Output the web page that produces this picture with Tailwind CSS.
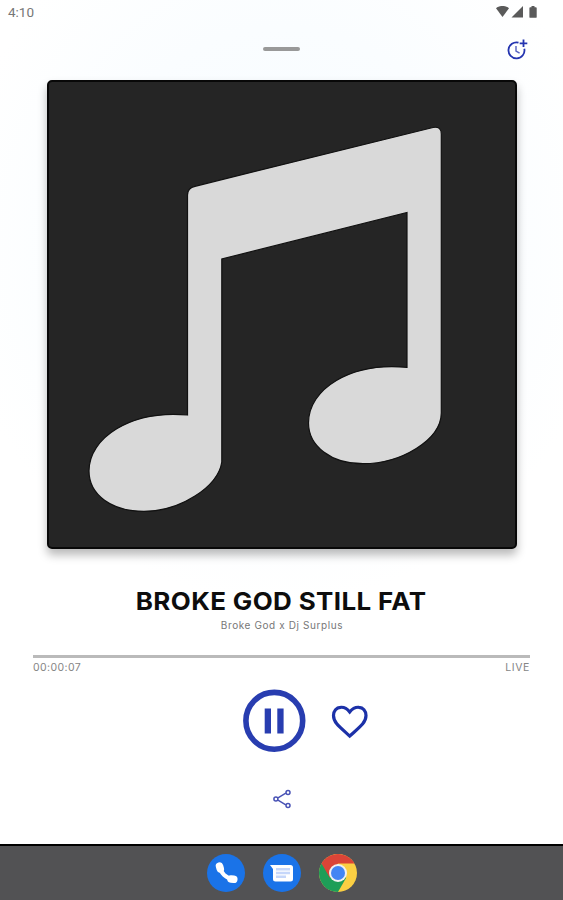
<!DOCTYPE html>
<html lang="en">
<head>
  <meta charset="UTF-8" />
  <meta name="viewport" content="width=device-width, initial-scale=1.0"/>
  <title>Now Playing</title>
  <script src="https://cdn.jsdelivr.net/npm/@tailwindcss/browser@4"></script>
</head>
<body class="bg-white font-['Inter','Liberation_Sans',sans-serif]">
  <div class="flex flex-col h-[900px] w-[563px] overflow-hidden bg-[radial-gradient(ellipse_330px_360px_at_50%_27%,#f6fbff_0%,#fafdff_60%,#ffffff_100%)]">

    <!-- Status bar -->
    <header class="flex h-6 shrink-0 items-center justify-between pl-2 pr-[25px]">
      <span class="font-['Roboto',sans-serif] text-[13.5px] leading-6 text-[#777]">4:10</span>
      <svg class="h-3 w-[42px]" viewBox="496 6 42 12" fill="#5a5a5a">
        <path d="M496 8.2C499.5 5.2 505.500 5.2 509 8.200L502.500 17Z"/>
        <path d="M523 6V17.500H511.500Z"/>
        <path d="M531.500 6h3v1.200h1.300q.9 0 .9.900v8.800q0 .9-.9.900h-5.500q-.9 0-.9-.9V8.100q0-.9.900-.9h1.200Z"/>
      </svg>
    </header>

    <!-- Drag handle and sleep timer -->
    <div class="grid h-[55.500px] shrink-0 grid-cols-3 px-[35px] pt-[13px]">
      <span></span>
      <div class="mt-[10px] h-1 w-[37px] justify-self-center rounded-full bg-[#999]"></div>
      <button class="h-6 w-6 justify-self-end" aria-label="Sleep timer">
        <svg class="h-6 w-6" viewBox="504 37 24 24" fill="none" stroke="#2434b0" stroke-width="1.800">
          <path d="M518.500 42.700A8 8 0 1 0 524.300 48.800" />
          <path d="M516 46v5l3.600 2.200" stroke-width="1.400" stroke="#5560c0"/>
          <path d="M523.500 39.500v7.600M519.700 43.300h7.600"/>
        </svg>
      </button>
    </div>

    <!-- Cover art -->
    <div class="mx-auto h-[469.500px] w-[470px] shrink-0 overflow-hidden rounded-[5px] border-2 border-[#080808] bg-[#252525] shadow-[0_6px_10px_rgba(0,0,0,0.28)]">
      <svg class="h-[465px] w-[466px]" viewBox="49 82 466 465">
        <path fill="#d9d9d9" stroke="#111" stroke-width="1.200" d="M187.500 415V195Q187.500 188 195 186.300L433 127.500Q441.300 126 441.300 134V413C441 440 401 463.700 363 463.700C331 463.700 308.500 446 308.500 423C308.500 389 350 362 407 367.300V212.500L221.800 259V462C218 487 180 511.300 144 511.300C112 511.300 89 495 89 471C89 438 130 410 187.500 415Z"/>
      </svg>
    </div>

    <!-- Track info -->
    <div class="mt-[37px] flex shrink-0 flex-col items-center">
      <h1 class="h-[30px] scale-x-[1.060] whitespace-nowrap text-[24.500px] font-bold leading-[30px] tracking-[0.350px] text-[#0d0d0d]">BROKE GOD STILL FAT</h1>
      <p class="mt-px h-4 whitespace-nowrap pl-px text-[10px] leading-4 tracking-[0.600px] text-[#777]">Broke God x Dj Surplus</p>
    </div>

    <!-- Progress -->
    <div class="mx-[33px] mt-[22px] shrink-0">
      <div class="h-[3px] bg-[#bababa]"></div>
      <div class="mt-[2px] flex h-4 justify-between text-[10.500px] leading-4 text-[#858585]">
        <span class="tracking-[0.400px]">00:00:07</span>
        <span class="tracking-[0.600px]">LIVE</span>
      </div>
    </div>

    <!-- Playback controls -->
    <div class="mt-[13px] flex h-[63px] shrink-0 items-center gap-[23px] pl-[243px]">
      <button aria-label="Pause">
        <svg class="h-[63px] w-[63px]" viewBox="0 0 63 63" fill="none">
          <circle cx="31.300" cy="31.800" r="28.400" stroke="#283db0" stroke-width="5.600"/>
          <path fill="#283db0" d="M21.700 19.500h6.300v25h-6.300ZM34.300 19.500h6.300v25h-6.300Z"/>
        </svg>
      </button>
      <button aria-label="Favorite">
        <svg class="h-[42px] w-[42px]" viewBox="329 699.500 42 42" fill="none" stroke="#1c31a8" stroke-width="3.200">
          <path d="M349.700 711.500C347 708 343.500 706.500 340.500 706.800C336.500 707 333.500 710.500 333.500 715C333.500 722 339 726 349.700 735.500C360.400 726 366 722 366 715C366 710.500 363 707 359 706.800C356 706.500 352.500 708 349.700 711.500Z"/>
        </svg>
      </button>
    </div>

    <button class="mx-auto mt-[35px] h-6 w-6 shrink-0" aria-label="Share">
      <svg class="h-6 w-6" viewBox="0 0 24 24" fill="none" stroke="#4852b5" stroke-width="1.500">
        <path d="M8 10.800 15.800 6.200M8 13.200l7.800 4.600"/>
        <circle cx="5.900" cy="12" r="2"/>
        <circle cx="18" cy="5.400" r="2"/>
        <circle cx="18" cy="18.600" r="2"/>
      </svg>
    </button>

    <!-- Dock -->
    <nav class="mt-auto flex h-14 shrink-0 items-center justify-center gap-[18px] border-t-2 border-black bg-[#525254] pb-px">
      <svg class="h-[38px] w-[38px]" viewBox="0 0 38 38">
        <circle cx="19" cy="19" r="19" fill="#1a73e8"/>
        <path d="M13 12.500C13.500 19 19 24.500 26.500 25.300" fill="none" stroke="#fff" stroke-width="4"/>
        <path d="M12.500 12.200l.8 2.600M24 25l2.800.3" fill="none" stroke="#fff" stroke-width="7.500" stroke-linecap="round"/>
      </svg>
      <svg class="h-[38px] w-[38px]" viewBox="0 0 38 38">
        <circle cx="19" cy="19" r="19" fill="#1a73e8"/>
        <path fill="#fff" d="M7 11H27.500q2.500 0 2.500 2.500V25q0 2.500-2.500 2.500H12.500Q10 27.500 10 25V15Z"/>
        <path fill="#c6d7fa" d="M13 14h14v2.500H13ZM13 17.700h14v2.500H13ZM13 21.400h10v2.500H13Z"/>
      </svg>
      <svg class="h-[38px] w-[38px]" viewBox="0 0 38 38">
        <circle cx="19" cy="19" r="19" fill="#fbcf43"/>
        <path fill="#1e9e58" d="M19 19 2.550 9.500A19 19 0 0 0 19 38L27.200 23.750Z"/>
        <path fill="#db4437" d="M2.550 9.500A19 19 0 0 1 35.450 9.500H19L10.800 23.750Z"/>
        <circle cx="19" cy="19" r="9" fill="#f1f1f1"/>
        <circle cx="19" cy="19" r="7" fill="#4285f4"/>
      </svg>
    </nav>
  </div>
</body>
</html>
